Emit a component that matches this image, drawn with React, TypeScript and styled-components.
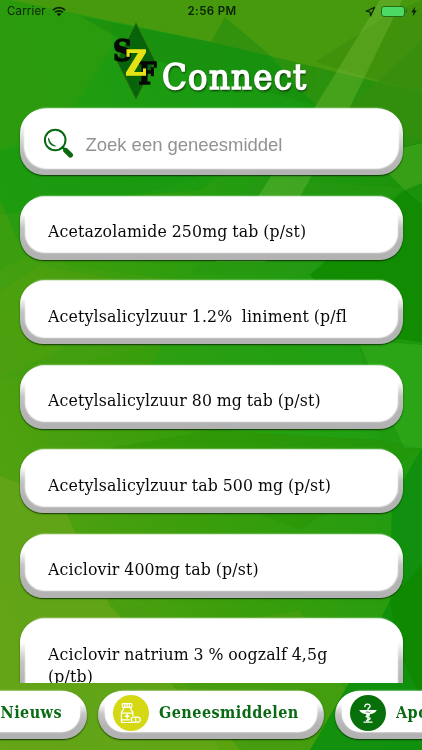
import React from "react";
import styled, { createGlobalStyle } from "styled-components";

const GlobalStyle = createGlobalStyle`
  * { box-sizing: border-box; }
  html, body { margin: 0; padding: 0; }
  body { overflow: hidden; background: #2f9a0d; }
`;

const slab = `"DejaVu Serif Condensed", "DejaVu Serif", serif`;

const Screen = styled.main`
  position: relative;
  isolation: isolate;
  display: flex;
  flex-direction: column;
  width: 422px;
  height: 750px;
  overflow: hidden;
  font-family: ${slab};
`;

const Backdrop = styled.svg`
  position: absolute;
  inset: 0;
  z-index: -1;
`;

const StatusBar = styled.header`
  display: grid;
  grid-template-columns: 1fr auto 1fr;
  align-items: center;
  height: 22px;
  padding: 0 5px 0 7px;
  font: 11.5px/22px Inter, sans-serif;
  color: #0b2204;
`;

const StatusGroup = styled.div<{ $end?: boolean }>`
  display: flex;
  align-items: center;
  justify-content: ${(p) => (p.$end ? "flex-end" : "flex-start")};
  gap: ${(p) => (p.$end ? "5px" : "6px")};
  letter-spacing: 0.15px;
`;

const Clock = styled.time`
  font-weight: 600;
  letter-spacing: 0.35px;
`;

const Battery = styled.span`
  width: 24px;
  height: 11px;
  border: 1px solid #276b18;
  border-radius: 3px;
  background: #4cd964;
`;

const BatteryEnd = styled.span`
  width: 1.5px;
  height: 4px;
  margin: 0 -1px 0 -4px;
  border-radius: 0 2px 2px 0;
  background: #276b18;
`;

const Brand = styled.div`
  display: flex;
  height: 86.5px;
  padding-left: 110px;
`;

const BrandName = styled.h1`
  margin: 31px 0 0 0;
  font: 400 36px/48px ${slab};
  letter-spacing: 1.3px;
  color: #fff;
  -webkit-text-stroke: 1.5px #fff;
  text-shadow: 0 1px 2px #123f08, 1px 2px 2px #123f08;
`;

const Bevel = styled.div<{ $height?: number }>`
  display: flex;
  flex: none;
  height: ${(p) => p.$height ?? 63}px;
  padding: 0 6px 7.5px;
  border-radius: 23px;
  background: linear-gradient(#fff 0, #fff 26%, #c4c4c4 48%, #b4b4b4 72%, #b2b2b2);
  box-shadow: 0 1px 1.5px 0 rgba(12, 42, 5, 0.9);
`;

const Face = styled.div`
  display: flex;
  flex: 1;
  border-radius: 19px;
  background: #fff;
  box-shadow: 0 0 1.5px 0.3px #fff;
`;

const SearchBevel = styled(Bevel)`
  height: 66.5px;
  margin: 0 19.5px;
  padding: 0 5px 7.5px;
  border-radius: 24px;
  background: linear-gradient(#fff 0, #fff 20%, #bbb 65%, #b2b2b2);
`;

const SearchFace = styled(Face)`
  align-items: center;
  padding: 10px 0 0 18px;
  gap: 12px;
  border-radius: 22px;
`;

const Placeholder = styled.span`
  font: 18.5px/24px "Liberation Sans", Arial, sans-serif;
  letter-spacing: -0.03px;
  color: #929292;
  padding-top: 4px;
`;

const List = styled.ul`
  display: flex;
  flex-direction: column;
  gap: 21.5px;
  height: 508px;
  margin: 0;
  padding: 21.5px 19px 0 19.5px;
  overflow: hidden;
  list-style: none;
`;

const MedicineText = styled.span`
  width: 310px;
  margin: 23.5px 0 0 22.5px;
  font: 17.5px/22.5px ${slab};
  letter-spacing: 0.17px;
  word-spacing: -0.5px;
  white-space: pre-wrap;
  color: #080808;
`;

const Tabs = styled.nav`
  display: flex;
  gap: 11px;
  height: 67px;
  margin-left: -100px;
  padding-top: 8px;
`;

const Tab = styled(Bevel)<{ $width: number }>`
  width: ${(p) => p.$width}px;
  height: 48px;
  padding: 0 7px 7px;
  border-radius: 24px;
`;

const TabFace = styled(Face)<{ $end?: boolean }>`
  align-items: center;
  justify-content: ${(p) => (p.$end ? "flex-end" : "flex-start")};
  gap: 10px;
  padding: 2px ${(p) => (p.$end ? 18 : 0)}px 0 8px;
`;

const TabLabel = styled.span`
  font: 700 16px/22px ${slab};
  letter-spacing: 0.45px;
  white-space: nowrap;
  color: #096a13;
`;

const Disc = styled.span<{ $color: string }>`
  display: grid;
  place-items: center;
  flex: none;
  width: 36px;
  height: 36px;
  border-radius: 50%;
  background: ${(p) => p.$color};
`;

const facets: [string, string, number][] = [
  ["0,0 315,0 315,105 200,190 130,196 0,215", "#189a10", 0.55],
  ["0,0 10,0 112,22 112,48 75,105 0,150", "#2e9b0d", 0.7],
  ["10,0 422,0 422,93 211,42", "#469a0d", 1],
  ["225,17 271,56 315,105 422,140 422,93 211,42", "#2e910b", 0.9],
  ["80,16 211,42 270,56 315,105 160,62", "#168d09", 0.65],
  ["315,62 388,15 422,0 422,93", "#3e8c08", 0.55],
  ["0,150 75,140 200,178 130,196 55,240 0,270", "#0d9813", 0.35],
  ["422,40 422,142 390,150 340,130 350,107", "#358f0a", 0.7],
  ["394,150 422,143 422,183 405,190 385,170", "#45a51d", 0.7],
  ["255,178 405,188 355,225 310,275 190,275", "#27970f", 0.6],
  ["310,275 405,190 422,205 422,342 370,335", "#098906", 0.8],
  ["0,200 20,245 65,265 211,285 180,340 0,380", "#459e0e", 0.55],
  ["0,292 40,266 120,280 60,350 0,378", "#54a10f", 0.5],
  ["165,340 358,340 380,440 211,430 150,370", "#24a215", 0.5],
  ["358,340 422,345 422,448 404,448", "#2ea61b", 0.9],
  ["211,430 380,440 422,448 300,530 100,450", "#248f0a", 0.35],
  ["0,476 60,500 110,606 190,690 220,750 0,750", "#65a517", 0.8],
  ["110,600 211,625 300,610 345,690 310,750 220,750", "#489c0d", 0.7],
  ["92,690 190,690 240,750 105,750", "#62a516", 0.7],
  ["422,448 422,750 310,750 348,685 390,600 392,500", "#118f08", 0.9],
  ["390,600 422,565 422,700 398,650", "#078405", 0.55],
  ["380,0 402,0 350,107 301,195 265,262 215,262 259,195 315,107", "#a9d76b", 0.22],
];

const Background = () => (
  <Backdrop width="422" height="750" viewBox="0 0 422 750" aria-hidden>
    <defs>
      <linearGradient id="field" x1="0" y1="1" x2="1" y2=".15">
        <stop offset="0" stopColor="#63a414" />
        <stop offset=".42" stopColor="#3b9e0b" />
        <stop offset=".72" stopColor="#219c10" />
        <stop offset="1" stopColor="#198f09" />
      </linearGradient>
      <filter id="soft"><feGaussianBlur stdDeviation=".7" /></filter>
    </defs>
    <rect width="422" height="750" fill="url(#field)" />
    <g filter="url(#soft)">
      {facets.map(([points, fill, opacity]) => (
        <polygon key={points} points={points} fill={fill} opacity={opacity} />
      ))}
    </g>
  </Backdrop>
);

const Wifi = () => (
  <svg width="14" height="11" viewBox="0 0 14 11" fill="none" stroke="#0b2204" strokeWidth="1.8">
    <path d="M1 4.1a8.6 8.6 0 0 1 12 0M3.1 6.4a5.6 5.6 0 0 1 7.8 0" />
    <path d="M4.8 8.1a3.1 3.1 0 0 1 4.4 0L7 10.3z" fill="#0b2204" stroke="none" />
  </svg>
);

const LocationArrow = () => (
  <svg width="11" height="11" viewBox="0 0 11 11" fill="none" stroke="#0b2204" strokeWidth="1.2" strokeLinejoin="round">
    <path d="M9.6 1.2 1.2 5.2l3.9.8.5 3.9z" />
  </svg>
);

const Bolt = () => (
  <svg width="6" height="11" viewBox="0 0 6 11" fill="#0b2204">
    <path d="M4.2.5.2 6.2h2.3L1.6 10.5l4.2-6H3.4z" />
  </svg>
);

const Emblem = () => (
  <svg width="52" height="82" viewBox="110 22 52 82" fontFamily="DejaVu Serif, serif" fontWeight="700">
    <path d="M136 22.5 155.5 61 136 100 116.5 61z" fill="#07640a" stroke="#378510" />
    <text x="113" y="61" fontSize="30" textLength="19" lengthAdjust="spacingAndGlyphs" fill="#050805" stroke="#050805" strokeWidth="1.5">S</text>
    <text x="138.5" y="84" fontSize="29" textLength="18" lengthAdjust="spacingAndGlyphs" fill="#050805" stroke="#050805" strokeWidth="1.5">F</text>
    <text x="125.5" y="75.3" fontSize="33" textLength="21" lengthAdjust="spacingAndGlyphs" fill="#e5e315" stroke="#e5e315" strokeWidth="1.3">Z</text>
  </svg>
);

const Magnifier = () => (
  <svg width="31" height="31" viewBox="0 0 31 31" fill="none" stroke="#096810" strokeLinecap="round">
    <circle cx="12.2" cy="12" r="10.3" strokeWidth="2" />
    <path d="m19.6 19.4 3 3" strokeWidth="2.4" />
    <path d="m22.7 22.4 4.8 4.7" strokeWidth="5" />
    <path d="M5.6 10.5c-.2 4.6 2.4 7.4 6.9 7.5-3.3-1.3-5.8-3.3-6.9-7.5z" fill="#096810" strokeWidth=".8" />
  </svg>
);

const PillBottle = () => (
  <svg width="36" height="36" viewBox="0 0 36 36" fill="none" stroke="#fff" strokeWidth="1.2" strokeLinejoin="round">
    <rect x="9.3" y="8.6" width="9.6" height="3.8" rx=".8" />
    <path d="M11.8 9v3M14.1 9v3M16.4 9v3M10.5 12.5v2.1L8.4 17v9.2c0 .8.5 1.3 1.3 1.3h9.1M17.8 12.5v2.1l2.1 2.4v4" />
    <path d="M8.5 18.2h11.2M8.5 24.8h8.2" />
    <path d="M14.2 19v4.6M11.9 21.3h4.6" strokeWidth="1.5" />
    <rect x="18.2" y="22.2" width="9" height="5" rx="2.5" />
    <path d="M22.7 22.3v4.8" />
  </svg>
);

const HygieiaCup = () => (
  <svg width="36" height="36" viewBox="0 0 36 36" fill="none" stroke="#fff" strokeWidth="1.3" strokeLinecap="round">
    <path d="M9.2 15h17.6c-1.2 3-4 3.8-7 4.1v2.2h-3.6v-2.2c-3-.3-5.8-1.1-7-4.1z" fill="#fff" stroke="none" />
    <path d="M18 20v6M14 27.2h8" />
    <path d="M14.8 11.7c.1-3.1 5.1-3.7 5.3-.5.1 2-3.5 2.1-1.7 4 1.1 1.2 3.4 1.5 2.7 3" />
    <path d="M16 21.5c1 1.2 4.5.6 4.1 2.3-.3 1.2-3 .5-3.5 2" />
    <path d="M16 17c1.7-.8 3 1.5 4.3.2" stroke="#08700b" strokeWidth=".7" />
  </svg>
);

const medicines = [
  "Acetazolamide 250mg tab (p/st)",
  "Acetylsalicylzuur 1.2%  liniment (p/fl",
  "Acetylsalicylzuur 80 mg tab (p/st)",
  "Acetylsalicylzuur tab 500 mg (p/st)",
  "Aciclovir 400mg tab (p/st)",
  "Aciclovir natrium 3 % oogzalf 4,5g (p/tb)",
];

export default function App() {
  return (
    <>
      <GlobalStyle />
      <Screen>
        <Background />
        <StatusBar>
          <StatusGroup>Carrier <Wifi /></StatusGroup>
          <Clock>2:56 PM</Clock>
          <StatusGroup $end><LocationArrow /><Battery /><BatteryEnd /><Bolt /></StatusGroup>
        </StatusBar>
        <Brand>
          <Emblem />
          <BrandName>Connect</BrandName>
        </Brand>
        <SearchBevel>
          <SearchFace><Magnifier /><Placeholder>Zoek een geneesmiddel</Placeholder></SearchFace>
        </SearchBevel>
        <List>
          {medicines.map((name, i) => (
            <Bevel as="li" key={name} $height={i === 5 ? 88 : 63}>
              <Face><MedicineText>{name}</MedicineText></Face>
            </Bevel>
          ))}
        </List>
        <Tabs>
          <Tab $width={187}><TabFace $end><TabLabel>Nieuws</TabLabel></TabFace></Tab>
          <Tab $width={226}>
            <TabFace><Disc $color="#d4d914"><PillBottle /></Disc><TabLabel>Geneesmiddelen</TabLabel></TabFace>
          </Tab>
          <Tab $width={187}>
            <TabFace><Disc $color="#08700b"><HygieiaCup /></Disc><TabLabel>Apotheken</TabLabel></TabFace>
          </Tab>
        </Tabs>
      </Screen>
    </>
  );
}
